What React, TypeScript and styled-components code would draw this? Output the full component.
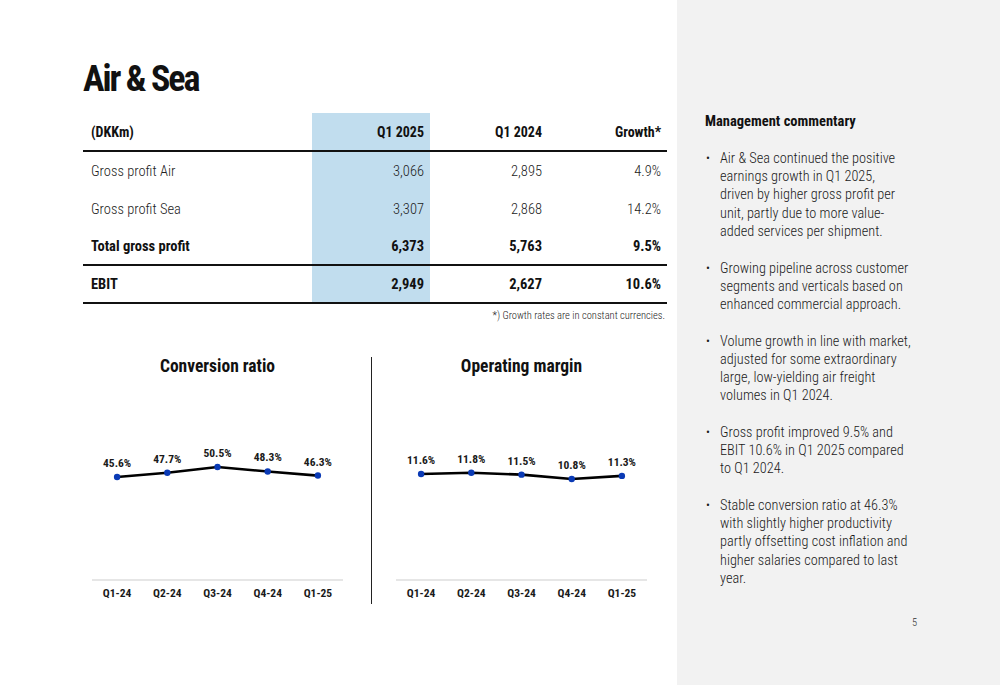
import React from "react";
import styled, { createGlobalStyle } from "styled-components";

const FONT = `Roboto, "Liberation Sans", sans-serif`;

const GlobalStyle = createGlobalStyle`
  html, body {
    margin: 0;
    padding: 0;
    background: #ffffff;
  }
  body {
    font-family: ${FONT};
    font-stretch: 75%;
    color: #1a1a1a;
  }
`;

type Row = {
  label: string;
  cur: string;
  prev: string;
  growth: string;
  bold?: boolean;
  rule?: boolean;
};

const rows: Row[] = [
  { label: "Gross profit Air", cur: "3,066", prev: "2,895", growth: "4.9%" },
  { label: "Gross profit Sea", cur: "3,307", prev: "2,868", growth: "14.2%" },
  { label: "Total gross profit", cur: "6,373", prev: "5,763", growth: "9.5%", bold: true, rule: true },
  { label: "EBIT", cur: "2,949", prev: "2,627", growth: "10.6%", bold: true, rule: true },
];

type Chart = {
  title: string;
  values: number[];
  // pixel y of the first point and px per unit
  base: number;
  scale: number;
  padLeft: number;
  padRight: number;
  divider?: boolean;
};

const quarters = ["Q1-24", "Q2-24", "Q3-24", "Q4-24", "Q1-25"];

const charts: Chart[] = [
  { title: "Conversion ratio", values: [45.6, 47.7, 50.5, 48.3, 46.3], base: 96, scale: 2.04, padLeft: 9, padRight: 28 },
  { title: "Operating margin", values: [11.6, 11.8, 11.5, 10.8, 11.3], base: 93, scale: 6.25, padLeft: 24, padRight: 20, divider: true },
];

const bullets = [
  "Air & Sea continued the positive earnings growth in Q1 2025, driven by higher gross profit per unit, partly due to more value-added services per shipment.",
  "Growing pipeline across customer segments and verticals based on enhanced commercial approach.",
  "Volume growth in line with market, adjusted for some extraordinary large, low-yielding air freight volumes in Q1 2024.",
  "Gross profit improved 9.5% and EBIT 10.6% in Q1 2025 compared to Q1 2024.",
  "Stable conversion ratio at 46.3% with slightly higher productivity partly offsetting cost inflation and higher salaries compared to last year.",
];

const PLOT_W = 251;
const PLOT_H = 200;
const SLOT = PLOT_W / 5;

const LineChart = ({ chart }: { chart: Chart }) => {
  const pts = chart.values.map((v, i) => ({
    x: SLOT * i + SLOT / 2,
    y: chart.base - (v - chart.values[0]) * chart.scale,
    v,
  }));
  const d = pts.map((p, i) => `${i === 0 ? "M" : "L"}${p.x.toFixed(1)} ${p.y.toFixed(1)}`).join(" ");
  return (
    <svg width={PLOT_W} height={PLOT_H} viewBox={`0 0 ${PLOT_W} ${PLOT_H}`}>
      <line x1={0} y1={PLOT_H - 1} x2={PLOT_W} y2={PLOT_H - 1} stroke="#e6e6e6" strokeWidth={2} />
      <path d={d} fill="none" stroke="#000" strokeWidth={2.6} strokeLinejoin="round" />
      {pts.map((p) => (
        <g key={p.x}>
          <circle cx={p.x} cy={p.y} r={3.2} fill="#0a3ab5" />
          <DataLabel x={p.x} y={p.y - 10} textAnchor="middle">
            {p.v.toFixed(1)}%
          </DataLabel>
        </g>
      ))}
    </svg>
  );
};

export default function App() {
  return (
    <>
      <GlobalStyle />
      <Page>
        <Main>
          <Title>Air &amp; Sea</Title>
          <Table>
            <HeadCell $align="left">(DKKm)</HeadCell>
            <HeadCell $highlight>Q1 2025</HeadCell>
            <HeadCell>Q1 2024</HeadCell>
            <HeadCell>Growth*</HeadCell>
            {rows.map((r) => (
              <React.Fragment key={r.label}>
                <Cell $align="left" $bold={r.bold} $rule={r.rule}>{r.label}</Cell>
                <Cell $highlight $bold={r.bold} $rule={r.rule}>{r.cur}</Cell>
                <Cell $bold={r.bold} $rule={r.rule}>{r.prev}</Cell>
                <Cell $bold={r.bold} $rule={r.rule}>{r.growth}</Cell>
              </React.Fragment>
            ))}
          </Table>
          <Footnote>*) Growth rates are in constant currencies.</Footnote>
          <Charts>
            {charts.map((c) => (
              <ChartPanel key={c.title} $left={c.padLeft} $right={c.padRight} $divider={c.divider}>
                <Plot>
                  <ChartTitle>{c.title}</ChartTitle>
                  <LineChart chart={c} />
                  <Axis>
                    {quarters.map((q) => (
                      <AxisLabel key={q}>{q}</AxisLabel>
                    ))}
                  </Axis>
                </Plot>
              </ChartPanel>
            ))}
          </Charts>
        </Main>
        <Side>
          <SideTitle>Management commentary</SideTitle>
          <Bullets>
            {bullets.map((b) => (
              <Bullet key={b}>{b}</Bullet>
            ))}
          </Bullets>
          <PageNo>5</PageNo>
        </Side>
      </Page>
    </>
  );
}

const Page = styled.div`
  width: 1000px;
  height: 685px;
  display: flex;
  overflow: hidden;
`;

const Main = styled.div`
  width: 677px;
  box-sizing: border-box;
  padding: 58px 10px 0 83px;
  display: flex;
  flex-direction: column;
`;

const Title = styled.h1`
  margin: 0 0 13px 0;
  font-size: 36px;
  line-height: 42px;
  font-weight: 700;
  letter-spacing: -2px;
  color: #111;
`;

const Table = styled.div`
  display: grid;
  grid-template-columns: 229px 118px 118px 119px;
`;

const HeadCell = styled.div<{ $align?: string; $highlight?: boolean }>`
  height: 39px;
  box-sizing: border-box;
  border-bottom: 2px solid #111;
  display: flex;
  align-items: center;
  justify-content: ${(p) => (p.$align === "left" ? "flex-start" : "flex-end")};
  padding: 0 6px 0 8px;
  font-size: 14px;
  font-weight: 700;
  color: #111;
  background: ${(p) => (p.$highlight ? "#c1ddee" : "transparent")};
`;

const Cell = styled.div<{ $align?: string; $highlight?: boolean; $bold?: boolean; $rule?: boolean }>`
  height: 38px;
  box-sizing: border-box;
  border-bottom: ${(p) => (p.$rule ? "2px solid #111" : "none")};
  display: flex;
  align-items: center;
  justify-content: ${(p) => (p.$align === "left" ? "flex-start" : "flex-end")};
  padding: 0 6px 0 8px;
  font-size: 14.5px;
  font-weight: ${(p) => (p.$bold ? 700 : 300)};
  color: ${(p) => (p.$bold ? "#111" : "#222")};
  background: ${(p) => (p.$highlight ? "#c1ddee" : "transparent")};
`;

const Footnote = styled.div`
  margin-top: 6px;
  padding-right: 2px;
  text-align: right;
  font-size: 10.5px;
  line-height: 12px;
  font-weight: 300;
  color: #222;
`;

const Charts = styled.div`
  margin-top: 35px;
  display: flex;
`;

const ChartPanel = styled.div<{ $left: number; $right: number; $divider?: boolean }>`
  padding: 0 ${(p) => p.$right}px 0 ${(p) => p.$left}px;
  border-left: ${(p) => (p.$divider ? "1.5px solid #222" : "none")};
  height: 247px;
`;

const Plot = styled.div`
  width: ${PLOT_W}px;
  display: flex;
  flex-direction: column;
`;

const ChartTitle = styled.div`
  margin-top: -2px;
  height: 26px;
  text-align: center;
  font-size: 17.5px;
  line-height: 22px;
  font-weight: 700;
  color: #111;
`;

const DataLabel = styled.text`
  font-family: ${FONT};
  font-stretch: 75%;
  font-weight: 700;
  font-size: 11.5px;
  fill: #1a1a1a;
`;

const Axis = styled.div`
  display: flex;
  margin-top: 5px;
`;

const AxisLabel = styled.div`
  flex: 1;
  text-align: center;
  font-size: 11.5px;
  font-weight: 700;
  color: #1a1a1a;
`;

const Side = styled.div`
  flex: 1;
  background: #f2f2f2;
  padding: 113px 0 0 28px;
  position: relative;
`;

const SideTitle = styled.div`
  font-size: 14.5px;
  line-height: 17px;
  font-weight: 700;
  color: #111;
`;

const Bullets = styled.ul`
  margin: 19px 0 0 0;
  padding: 0 0 0 15px;
  width: 191px;
  display: flex;
  flex-direction: column;
  gap: 18.5px;
`;

const Bullet = styled.li`
  font-size: 14.3px;
  line-height: 18.2px;
  font-weight: 300;
  color: #1a1a1a;
  list-style: none;
  position: relative;

  &::before {
    content: "•";
    position: absolute;
    left: -14px;
    top: 0;
    font-size: 12px;
  }
`;

const PageNo = styled.div`
  position: absolute;
  left: 235px;
  top: 616px;
  font-size: 10.5px;
  font-weight: 300;
  color: #333;
`;
